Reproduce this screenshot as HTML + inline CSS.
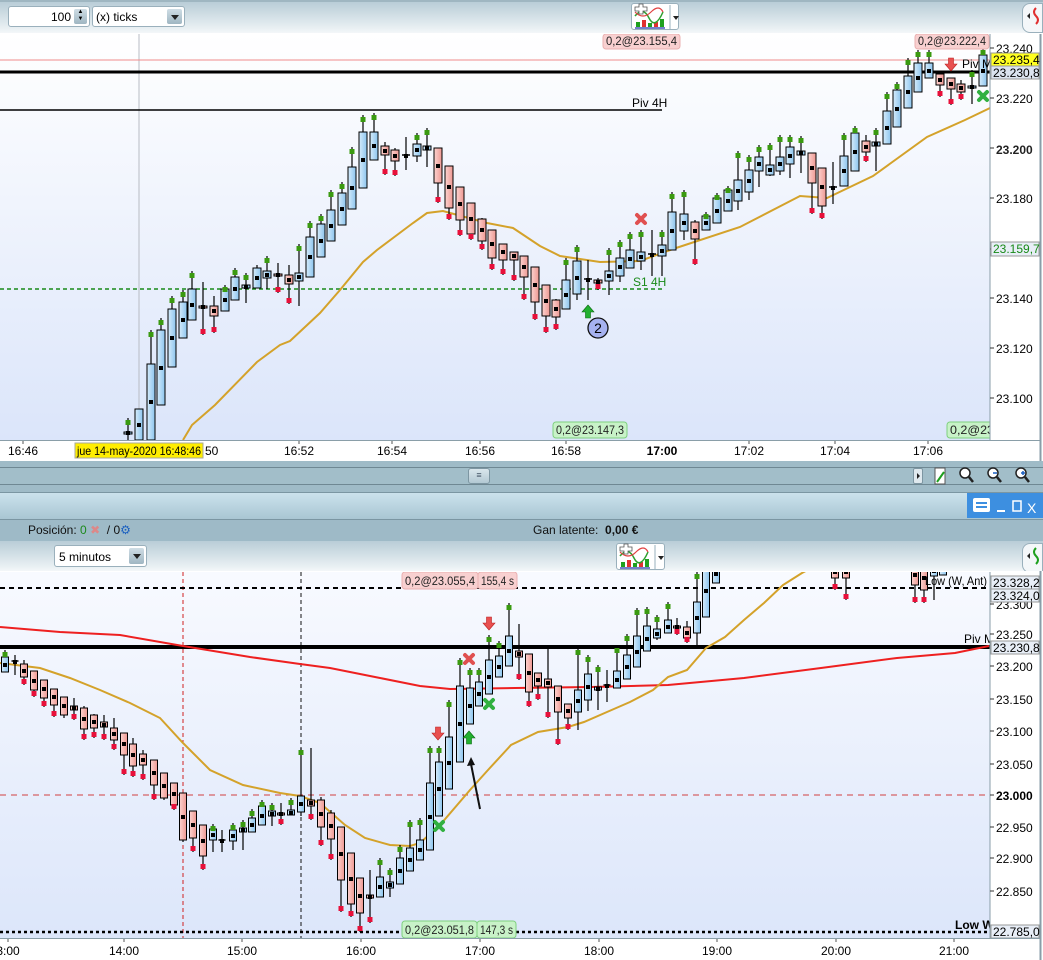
<!DOCTYPE html>
<html><head><meta charset="utf-8">
<style>
html,body{margin:0;padding:0;width:1043px;height:960px;overflow:hidden;background:#fff;font-family:"Liberation Sans",sans-serif;}
.abs{position:absolute;}
.tb{background:linear-gradient(#b9cdd7,#e9f0f3 85%,#f4f7f9);}
.inp{position:absolute;background:#fff;border:1px solid #9ab0bc;border-radius:3px;font-size:12px;box-sizing:border-box;}
.dd{position:absolute;right:2px;top:2px;width:15px;bottom:2px;background:linear-gradient(#cfdde5,#9fb6c2);border-radius:2px;}
.dd:after{content:"";position:absolute;left:4px;top:6px;border-left:4px solid transparent;border-right:4px solid transparent;border-top:5px solid #222;}
.t{font-size:12px;color:#111;}
</style></head><body>
<div class="abs tb" style="left:0;top:0;width:1043px;height:33px;border-top:2px solid #9fb6c1;box-sizing:border-box;"></div>
<div class="inp" style="left:8px;top:6px;width:82px;height:21px;"><span style="position:absolute;right:18px;top:3px;">100</span><div style="position:absolute;right:2px;top:2px;width:13px;height:15px;background:linear-gradient(#cfdde5,#9fb6c2);border-radius:2px;font-size:6px;line-height:7px;text-align:center;">▲<br>▼</div></div>
<div class="inp" style="left:92px;top:6px;width:93px;height:21px;"><span style="position:absolute;left:3px;top:3px;">(x) ticks</span><div class="dd"></div></div>
<div class="abs" style="left:631px;top:3px;width:48px;height:27px;border:1px solid #9ab0bc;border-radius:3px;background:#fff;box-sizing:border-box;"></div>
<div class="abs" style="left:1022px;top:3px;width:21px;height:30px;border:1px solid #9ab0bc;border-radius:8px 0 0 8px;background:#f4f7f9;box-sizing:border-box;"></div>

<div class="abs" style="left:0;top:461px;width:1043px;height:31px;background:#9fbbc7;"></div>
<div class="abs" style="left:0;top:467px;width:1043px;height:16px;background:#a2bec9;border-top:1px solid #6f8893;border-bottom:1px solid #6f8893;"></div>
<div class="abs" style="left:468px;top:468px;width:22px;height:16px;background:linear-gradient(#d9e6ec,#b3c9d3);border:1px solid #7d96a2;border-radius:3px;box-sizing:border-box;font-size:9px;text-align:center;line-height:13px;color:#456">≡</div>
<div class="abs" style="left:913px;top:468px;width:10px;height:16px;background:#dfe9ee;border:1px solid #7d96a2;border-radius:2px;box-sizing:border-box;"></div>
<div class="abs" style="left:0;top:492px;width:1043px;height:27px;background:linear-gradient(#cbe2ec,#a9c6d3);border-top:1px solid #7b96a2;box-sizing:border-box;"></div>
<div class="abs" style="left:967px;top:493px;width:76px;height:25px;background:#3d8fe0;"></div>
<div class="abs" style="left:0;top:519px;width:1043px;height:21px;background:#9ebac7;border-top:1px solid #7b96a2;border-bottom:1px solid #7b96a2;"></div>
<div class="abs t" style="left:28px;top:523px;">Posición: <span style="color:#1c8a1c">0</span> <span style="color:#d88">✖</span>&nbsp; / 0<span style="color:#1a5fc0">⚙</span></div>
<div class="abs t" style="left:533px;top:523px;">Gan latente:&nbsp; <b>0,00 €</b></div>
<div class="abs tb" style="left:0;top:541px;width:1043px;height:30px;"></div>
<div class="inp" style="left:54px;top:545px;width:93px;height:22px;"><span style="position:absolute;left:4px;top:4px;">5 minutos</span><div class="dd"></div></div>
<div class="abs" style="left:616px;top:543px;width:49px;height:27px;border:1px solid #9ab0bc;border-radius:3px;background:#fff;box-sizing:border-box;"></div>
<div class="abs" style="left:1022px;top:543px;width:21px;height:30px;border:1px solid #9ab0bc;border-radius:8px 0 0 8px;background:#f4f7f9;box-sizing:border-box;"></div>

<svg id="s" class="abs" style="left:0;top:0" width="1043" height="960" xmlns="http://www.w3.org/2000/svg" font-family="Liberation Sans, sans-serif"></svg>
<script>
var T=[[128,432,434,418,440,'b'],[139,409,440,409,440,'b'],[151,364,440,330,440,'b'],[161,330,405,318,405,'b'],[172,309,367,296,367,'b'],[183,302,338,290,338,'b'],[192,289,320,271,320,'b'],[203,306,308,282,335,'r'],[214,306,316,296,333,'r'],[225,289,311,285,311,'b'],[235,277,300,268,300,'b'],[246,285,288,273,303,'b'],[257,268,288,265,288,'b'],[267,271,278,256,289,'b'],[278,274,276,263,293,'r'],[289,275,284,265,304,'r'],[299,273,281,244,306,'b'],[310,237,277,221,277,'b'],[321,224,257,214,257,'b'],[331,210,241,190,241,'b'],[342,193,225,182,225,'b'],[352,167,209,147,209,'b'],[363,132,188,115,188,'b'],[374,132,160,113,160,'b'],[385,146,155,142,175,'r'],[395,150,161,148,176,'r'],[406,155,156,137,170,'d'],[417,144,156,133,162,'b'],[427,146,150,128,167,'b'],[438,148,183,148,203,'r'],[449,166,208,166,220,'r'],[460,187,220,187,236,'r'],[471,203,234,203,240,'r'],[482,219,241,218,250,'r'],[492,230,258,230,270,'r'],[503,244,260,244,275,'r'],[514,252,260,252,281,'r'],[524,256,277,256,300,'r'],[535,267,302,267,320,'r'],[546,285,316,285,333,'r'],[556,300,317,299,330,'r'],[566,280,309,258,309,'b'],[577,261,294,245,300,'b'],[588,279,280,260,300,'d'],[598,280,283,278,290,'r'],[609,271,281,248,295,'b'],[620,258,276,240,282,'b'],[630,250,268,232,268,'b'],[641,252,261,230,270,'b'],[652,254,255,230,276,'d'],[662,245,256,230,276,'b'],[672,212,250,192,250,'b'],[684,214,231,190,240,'b'],[695,222,239,220,265,'r'],[706,216,230,212,230,'b'],[717,198,223,193,223,'b'],[728,190,211,186,211,'b'],[738,180,201,151,210,'b'],[749,170,192,155,200,'b'],[759,157,171,145,187,'b'],[770,165,175,143,176,'b'],[780,157,171,135,175,'b'],[790,147,164,135,178,'b'],[801,151,155,136,173,'b'],[812,153,183,153,214,'r'],[822,168,206,168,219,'r'],[833,187,188,162,204,'d'],[844,156,186,133,186,'b'],[855,133,171,126,171,'b'],[866,141,152,135,162,'r'],[876,142,146,128,171,'b'],[887,111,144,92,144,'b'],[897,90,127,82,127,'b'],[908,76,108,58,108,'b'],[918,63,92,50,92,'b'],[929,63,78,50,78,'b'],[940,74,85,74,97,'r'],[951,78,89,78,105,'r'],[961,84,92,80,100,'r'],[972,86,88,70,104,'b'],[983,55,86,48,86,'b']];
var B=[[5,657,672,650,672,'b'],[15,661,663,655,675,'d'],[24,664,677,660,685,'r'],[34,671,690,671,697,'r'],[44,680,698,680,707,'r'],[54,689,705,689,717,'r'],[64,697,715,697,718,'r'],[74,706,710,698,720,'r'],[84,708,729,706,740,'r'],[94,715,728,714,738,'r'],[104,722,727,715,740,'r'],[114,728,740,718,750,'r'],[124,733,755,733,775,'r'],[133,744,766,738,777,'r'],[143,754,765,750,780,'r'],[154,760,785,760,800,'r'],[164,773,798,773,800,'r'],[174,783,805,783,810,'r'],[183,793,840,793,842,'r'],[193,811,838,811,852,'r'],[203,825,856,825,870,'r'],[213,829,840,824,852,'b'],[222,840,841,830,852,'d'],[233,830,841,823,850,'b'],[243,828,832,820,850,'b'],[252,818,832,809,832,'b'],[262,806,825,800,825,'b'],[272,811,816,803,826,'b'],[281,813,815,803,825,'r'],[291,810,815,798,815,'b'],[301,796,812,748,816,'b'],[311,800,806,748,820,'r'],[321,800,827,797,846,'r'],[331,813,839,810,860,'r'],[341,827,880,827,912,'r'],[351,853,904,853,917,'r'],[360,878,913,878,932,'r'],[370,895,898,870,923,'r'],[380,877,897,858,897,'b'],[390,882,888,868,897,'b'],[400,858,884,845,884,'b'],[410,848,871,820,871,'b'],[420,840,860,818,860,'b'],[430,783,850,746,850,'b'],[439,762,816,746,816,'b'],[449,737,789,700,789,'b'],[460,686,762,658,762,'b'],[470,688,724,668,724,'b'],[479,682,706,668,706,'b'],[489,660,694,635,694,'b'],[499,656,677,641,677,'b'],[509,636,666,603,666,'b'],[519,651,657,624,680,'r'],[529,654,692,654,707,'r'],[538,673,686,673,700,'r'],[548,679,687,648,718,'r'],[558,686,712,686,745,'r'],[568,704,718,704,730,'r'],[578,690,712,648,730,'b'],[588,674,700,655,711,'b'],[598,687,690,665,710,'b'],[607,685,686,670,702,'d'],[617,671,688,646,688,'b'],[627,655,679,634,679,'b'],[637,636,667,608,667,'b'],[647,626,651,607,651,'b'],[657,629,638,615,640,'b'],[668,620,633,602,633,'b'],[677,626,628,618,635,'r'],[687,627,638,621,643,'r'],[697,602,633,572,645,'b'],[706,565,617,565,617,'b'],[716,565,583,565,583,'b'],[835,565,578,565,590,'r'],[846,565,578,565,600,'r'],[915,565,585,565,603,'r'],[924,565,590,565,603,'r'],[934,565,576,565,600,'b'],[943,565,575,565,575,'b']];
var goldT=[[183,440],[192,425],[215,405],[257,362],[280,345],[290,341],[320,313],[340,290],[363,262],[377,250],[413,223],[427,213],[443,211],[487,223],[513,228],[540,246],[560,256],[600,262],[640,261],[673,249],[740,227],[800,196],[827,198],[873,176],[927,137],[965,120],[990,108]];
var goldB=[[0,663],[40,668],[70,678],[100,690],[130,703],[160,718],[183,743],[210,770],[243,785],[280,793],[300,796],[320,803],[345,825],[365,838],[390,845],[410,846],[420,843],[440,825],[470,790],[488,770],[511,745],[538,732],[568,727],[584,722],[607,712],[630,702],[653,690],[668,677],[687,670],[706,648],[725,637],[744,620],[764,603],[783,585],[802,573],[815,566]];
var redB=[[0,627],[60,632],[120,635],[183,646],[250,657],[300,664],[330,668],[380,678],[420,686],[450,689],[515,688],[591,687],[668,685],[744,678],[821,668],[897,658],[955,653],[989,646]];
function pl(p){return p.map(function(a){return a[0]+','+a[1]}).join(' ');}
function candles(arr,w){var s='';arr.forEach(function(c){var x=c[0],t=c[1],b=c[2],h=c[3],l=c[4],k=c[5];
s+='<line x1="'+x+'" y1="'+h+'" x2="'+x+'" y2="'+l+'" stroke="#000" stroke-width="1.2"/>';
if(k=='d'){s+='<line x1="'+(x-w/2)+'" y1="'+t+'" x2="'+(x+w/2)+'" y2="'+t+'" stroke="#000" stroke-width="1.5"/>';}
else{s+='<rect x="'+(x-w/2)+'" y="'+t+'" width="'+w+'" height="'+Math.max(b-t,2)+'" fill="url(#g'+k+')" stroke="#000" stroke-width="1"/>';}
var m=Math.round((t+b)/2);s+='<rect x="'+(x-2)+'" y="'+(m-2)+'" width="4" height="4" fill="#000"/>';
if(k=='b'&&h<t-3)s+='<rect x="'+(x-2.5)+'" y="'+(h+2)+'" width="5" height="5" fill="#3a9a10"/>';
if(k=='r'&&l>b+3)s+='<rect x="'+(x-2.5)+'" y="'+(l-6)+'" width="5" height="5" fill="#e8103a"/>';
});return s;}
function lab(x,y,t,o){return '<text x="'+x+'" y="'+y+'" font-size="12" '+(o||'')+'>'+t+'</text>';}
function box(x,y,w,h,t,f,st,c){return '<rect x="'+x+'" y="'+y+'" width="'+w+'" height="'+h+'" rx="3" fill="'+f+'" stroke="'+st+'"/><text x="'+(x+3)+'" y="'+(y+h-4)+'" font-size="12" textLength="'+(w-6)+'" lengthAdjust="spacingAndGlyphs" fill="'+(c||'#222')+'">'+t+'</text>';}
function arrowDn(x,y,c){return '<path d="M'+(x-2.5)+','+(y-8)+' h5 v6 h3.5 l-6,7 l-6,-7 h3.5z" fill="'+c+'" stroke="#b22" stroke-width=".6"/>';}
function arrowUp(x,y){return '<path d="M'+(x-2.5)+','+(y+8)+' h5 v-6 h3.5 l-6,-7 l-6,7 h3.5z" fill="#22b030" stroke="#0a6a10" stroke-width=".6"/>';}
function xm(x,y,c){return '<path d="M'+(x-4)+','+(y-4)+' L'+(x+4)+','+(y+4)+' M'+(x+4)+','+(y-4)+' L'+(x-4)+','+(y+4)+'" stroke="'+c+'" stroke-width="4" stroke-linecap="round"/>';}
var s='<defs><linearGradient id="gb" x1="0" x2="1"><stop offset="0" stop-color="#d6ecfb"/><stop offset="1" stop-color="#8cc4ee"/></linearGradient><linearGradient id="gr" x1="0" x2="1"><stop offset="0" stop-color="#fcd3d0"/><stop offset="1" stop-color="#ee9892"/></linearGradient>'+
'<linearGradient id="bgT" x1="0" y1="0" x2="0" y2="1"><stop offset="0" stop-color="#ffffff"/><stop offset="1" stop-color="#dbe5fa"/></linearGradient><linearGradient id="bgB" x1="0" y1="0" x2="0" y2="1"><stop offset="0" stop-color="#f8faff"/><stop offset="1" stop-color="#dce6fa"/></linearGradient>'+
'<clipPath id="cT"><rect x="0" y="34" width="990" height="406"/></clipPath><clipPath id="cB"><rect x="0" y="572" width="990" height="366"/></clipPath></defs>';
s+='<rect x="0" y="33" width="1043" height="428" fill="#fff"/><rect x="0" y="34" width="990" height="406" fill="url(#bgT)"/>';
s+='<g clip-path="url(#cT)">';
s+='<line x1="139" y1="34" x2="139" y2="440" stroke="#b8bcc4" stroke-width="1"/>';
s+='<line x1="0" y1="60" x2="990" y2="60" stroke="#f08c8c" stroke-width="1"/>';
s+='<line x1="0" y1="72" x2="990" y2="72" stroke="#000" stroke-width="3"/>';
s+='<line x1="0" y1="110" x2="662" y2="110" stroke="#000" stroke-width="1.5"/>';
s+='<line x1="0" y1="289" x2="662" y2="289" stroke="#188a18" stroke-width="1.5" stroke-dasharray="4,3"/>';
s+=lab(632,107,'Piv 4H','font-size="11"')+lab(633,286,'S1 4H','fill="#1a8a1a" font-size="11"');
s+='<polyline points="'+pl(goldT)+'" fill="none" stroke="#d4a22a" stroke-width="2"/>';
s+=candles(T,8);
s+=xm(641,219,'#e05050')+arrowUp(588,310)+'<circle cx="598" cy="328" r="10" fill="#a6b2f0" stroke="#111" stroke-width="1.3"/><text x="598" y="333" font-size="14" text-anchor="middle">2</text>';
s+=arrowDn(951,66,'#e85050')+xm(983,96,'#30b040')+lab(962,68,'Piv M','font-size="11"');
s+=box(603,34,77,15,'0,2@23.155,4','#f8d0d0','#eab0b0')+box(915,34,74,15,'0,2@23.222,4','#f8d0d0','#eab0b0');
s+=box(553,422,74,16,'0,2@23.147,3','#c8f2c8','#7ed07e')+box(947,422,50,16,'0,2@23','#c8f2c8','#7ed07e');
s+='</g>';
s+='<line x1="990" y1="34" x2="990" y2="440" stroke="#8a9ea8"/><line x1="1040.5" y1="34" x2="1040.5" y2="461" stroke="#8a9ea8" stroke-width="2"/>';
[[48,'23.240'],[98,'23.220'],[198,'23.180'],[298,'23.140'],[348,'23.120'],[398,'23.100']].forEach(function(a){s+='<line x1="990" y1="'+a[0]+'" x2="994" y2="'+a[0]+'" stroke="#333"/>'+lab(996,a[0]+5,a[1],'font-size="12"');});
s+='<line x1="990" y1="148" x2="994" y2="148" stroke="#333"/>'+lab(996,154,'23.200','font-size="14" font-weight="bold" fill="#222"');
s+='<line x1="990" y1="249" x2="994" y2="249" stroke="#333"/>';
s+='<rect x="991" y="53" width="48" height="14" fill="#ffff20" stroke="#999"/>'+lab(993,64,'23.235,4');
s+='<rect x="991" y="66" width="48" height="13" fill="#dbe3ef" stroke="#999"/>'+lab(993,77,'23.230,8');
s+='<rect x="991" y="242" width="48" height="14" fill="#e8eef7" stroke="#999"/>'+lab(993,253,'23.159,7','fill="#188a18"');
s+='<line x1="0" y1="440.5" x2="1040" y2="440.5" stroke="#8a9ea8"/>';
[[23,'16:46'],[299,'16:52'],[392,'16:54'],[480,'16:56'],[566,'16:58'],[749,'17:02'],[835,'17:04'],[928,'17:06']].forEach(function(a){s+='<line x1="'+a[0]+'" y1="441" x2="'+a[0]+'" y2="444" stroke="#555"/>'+lab(a[0],455,a[1],'text-anchor="middle" font-size="11"');});
s+=lab(662,455,'17:00','text-anchor="middle" font-weight="bold" font-size="12"');
s+='<rect x="75" y="443" width="128" height="15" fill="#ffee00" stroke="#aa9"/>'+lab(77,455,'jue 14-may-2020 16:48:46','font-size="11" textLength="124" lengthAdjust="spacingAndGlyphs"')+lab(205,455,'50','font-size="11"');
function tbIcon(x,y){return '<rect x="'+(x+3)+'" y="'+(y+18)+'" width="4" height="5" fill="#1ea01e"/><rect x="'+(x+9)+'" y="'+(y+16)+'" width="4" height="7" fill="#e03030"/><rect x="'+(x+15)+'" y="'+(y+19)+'" width="4" height="4" fill="#1ea01e"/><rect x="'+(x+21)+'" y="'+(y+18)+'" width="4" height="5" fill="#e03030"/><rect x="'+(x+27)+'" y="'+(y+15)+'" width="4" height="8" fill="#1ea01e"/><line x1="'+(x+2)+'" y1="'+(y+24)+'" x2="'+(x+32)+'" y2="'+(y+24)+'" stroke="#2233aa" stroke-width="1.3"/><path d="M'+(x+2)+','+(y+12)+' q8,-10 14,2 t14,-6" fill="none" stroke="#30a030" stroke-width="1.5"/><path d="M'+(x+2)+','+(y+8)+' q8,8 16,0 t12,0" fill="none" stroke="#e04040" stroke-width="1.2"/><path d="M'+(x+2)+','+(y+3)+' h4 v-3 h4 v3 h4 v4 h-4 v3 h-4 v-3 h-4z" fill="#fff" stroke="#555" stroke-width=".8"/><line x1="'+(x+37)+'" y1="'+(y+1)+'" x2="'+(x+37)+'" y2="'+(y+26)+'" stroke="#9ab0bc"/><path d="M'+(x+40)+','+(y+12)+' h6 l-3,4z" fill="#222"/>';}
s+=tbIcon(633,4)+tbIcon(618,544);
s+='<path d="M1027,16 l3,-3 v6z" fill="#222"/><path d="M1036,8 q-4,4 0,8 q4,4 0,8" fill="none" stroke="#e03030" stroke-width="2"/>';
s+='<path d="M1027,556 l3,-3 v6z" fill="#222"/><path d="M1036,548 q-4,4 0,8 q4,4 0,8" fill="none" stroke="#1ea01e" stroke-width="2"/>';
s+='<path d="M917,473 l3,3 l-3,3z" fill="#222"/>';
s+='<rect x="935" y="468" width="10" height="16" fill="#fff" stroke="#555"/><path d="M937,482 l7,-10" stroke="#1ea01e" stroke-width="2"/>';
[[968],[996],[1024]].forEach(function(a){s+='<circle cx="'+(a[0]-3)+'" cy="473" r="5" fill="#fff" stroke="#222" stroke-width="1.5"/><line x1="'+(a[0]+1)+'" y1="477" x2="'+(a[0]+5)+'" y2="482" stroke="#222" stroke-width="2.5"/>';});
s+='<line x1="993" y1="473" x2="997" y2="473" stroke="#1a5fc0" stroke-width="1.5"/><path d="M1021,473 h4 M1023,471 v4" stroke="#1a5fc0" stroke-width="1.5"/>';
s+='<rect x="973" y="498" width="17" height="14" rx="2" fill="#fff"/><rect x="976" y="502" width="11" height="2" fill="#3d8fe0"/><rect x="976" y="506" width="11" height="2" fill="#3d8fe0"/><rect x="997" y="510" width="8" height="2" fill="#fff"/><rect x="1013" y="501" width="8" height="10" fill="none" stroke="#fff" stroke-width="1.5"/><text x="1027" y="513" font-size="14" fill="#fff">X</text>';
s+='<rect x="0" y="571" width="1043" height="389" fill="#fff"/><rect x="0" y="572" width="990" height="366" fill="url(#bgB)"/>';
s+='<g clip-path="url(#cB)">';
s+='<line x1="183" y1="572" x2="183" y2="938" stroke="#d02020" stroke-dasharray="4,3"/><line x1="301" y1="572" x2="301" y2="938" stroke="#111" stroke-dasharray="4,3"/>';
s+='<line x1="0" y1="795" x2="990" y2="795" stroke="#d04040" stroke-dasharray="6,5"/>';
s+='<line x1="0" y1="588" x2="990" y2="588" stroke="#000" stroke-width="2" stroke-dasharray="5,4"/>';
s+='<line x1="0" y1="932" x2="990" y2="932" stroke="#000" stroke-width="2.5" stroke-dasharray="3,3"/>';
s+='<line x1="0" y1="647" x2="990" y2="647" stroke="#000" stroke-width="4"/>';
s+='<polyline points="'+pl(redB)+'" fill="none" stroke="#ee2020" stroke-width="2"/>';
s+='<polyline points="'+pl(goldB)+'" fill="none" stroke="#d4a22a" stroke-width="2"/>';
s+=candles(B,7);
s+=arrowDn(438,735,'#e85050')+arrowDn(489,625,'#e85050')+arrowUp(469,736)+xm(469,659,'#e05050')+xm(489,704,'#30b040')+xm(439,826,'#30b040');
s+='<line x1="480" y1="809" x2="471" y2="764" stroke="#111" stroke-width="2"/><path d="M471,757 l-4,9 l8,-1z" fill="#111"/>';
s+=lab(925,585,'Low (W, Ant)','textLength="62" lengthAdjust="spacingAndGlyphs"')+lab(964,643,'Piv M')+lab(955,929,'Low W','font-weight="bold"');
s+=box(402,572,76,17,'0,2@23.055,4','#f8d0d0','#eab0b0')+box(478,572,39,17,'155,4 s','#f8d0d0','#eab0b0');
s+=box(402,921,75,17,'0,2@23.051,8','#c8f2c8','#7ed07e')+box(477,921,39,17,'147,3 s','#c8f2c8','#7ed07e');
s+='</g>';
s+='<line x1="990" y1="572" x2="990" y2="938" stroke="#8a9ea8"/><line x1="1040.5" y1="571" x2="1040.5" y2="960" stroke="#8a9ea8" stroke-width="2"/>';
[[604,'23.300'],[634,'23.250'],[666,'23.200'],[699,'23.150'],[731,'23.100'],[764,'23.050'],[795,'23.000'],[827,'22.950'],[858,'22.900'],[891,'22.850']].forEach(function(a){s+='<line x1="990" y1="'+a[0]+'" x2="994" y2="'+a[0]+'" stroke="#333"/>'+lab(996,a[0]+5,a[1],a[1]=='23.000'?'font-weight="bold"':'');});
s+='<rect x="991" y="576" width="48" height="13" fill="#e8eef7" stroke="#999"/>'+lab(993,587,'23.328,2');
s+='<rect x="991" y="589" width="48" height="13" fill="#e8eef7" stroke="#999"/>'+lab(993,600,'23.324,0');
s+='<rect x="991" y="641" width="48" height="13" fill="#e8eef7" stroke="#999"/>'+lab(993,652,'23.230,8');
s+='<rect x="991" y="925" width="48" height="13" fill="#e8eef7" stroke="#999"/>'+lab(993,936,'22.785,0');
s+='<line x1="0" y1="938.5" x2="1040" y2="938.5" stroke="#8a9ea8"/>';
[[8,'3:00'],[124,'14:00'],[242,'15:00'],[361,'16:00'],[480,'17:00'],[599,'18:00'],[717,'19:00'],[836,'20:00'],[954,'21:00']].forEach(function(a){s+='<line x1="'+a[0]+'" y1="939" x2="'+a[0]+'" y2="942" stroke="#555"/>'+lab(a[0],955,a[1],'text-anchor="middle" font-size="11"');});
document.getElementById('s').innerHTML=s;
</script>
</body></html>
